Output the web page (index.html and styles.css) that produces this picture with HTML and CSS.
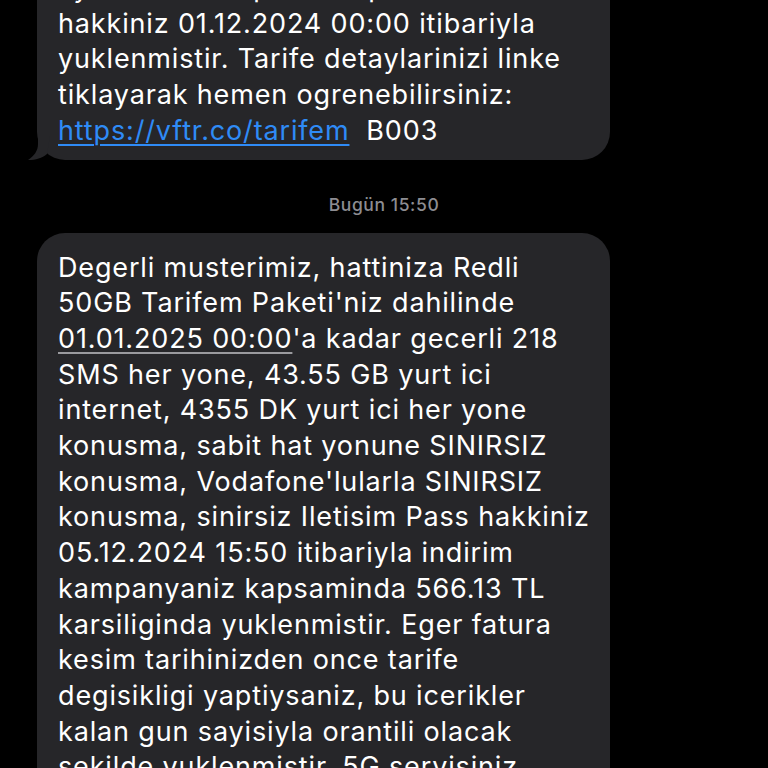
FILE: index.html
```html
<!DOCTYPE html>
<html lang="tr">
<head>
<meta charset="utf-8">
<title>Mesajlar</title>
<link rel="stylesheet" href="styles.css">
</head>
<body>
<div class="thread">
  <div class="bubble bubble-tail">
    <p class="msg">ayni zamanda paket kapsaminda sinirsiz<br>hakkiniz 01.12.2024 00:00 itibariyla<br>yuklenmistir. Tarife detaylarinizi linke<br>tiklayarak hemen ogrenebilirsiniz:<br><a class="link" href="#">https://vftr.co/tarifem</a>&nbsp; B003</p>
    <svg class="tail" width="22" height="24" viewBox="0 0 22 24"><path d="M10 0 L10 8 C10 15 6 20 0 24 C8 24 14 22 19 18 L22 0 Z" fill="#262629"/></svg>
  </div>
  <div class="stamp">Bugün 15:50</div>
  <div class="bubble">
    <p class="msg">Degerli musterimiz, hattiniza Redli<br>50GB Tarifem Paketi'niz dahilinde<br><span class="date">01.01.2025 00:00</span>'a kadar gecerli 218<br>SMS her yone, 43.55 GB yurt ici<br>internet, 4355 DK yurt ici her yone<br>konusma, sabit hat yonune SINIRSIZ<br>konusma, Vodafone'lularla SINIRSIZ<br>konusma, sinirsiz Iletisim Pass hakkiniz<br>05.12.2024 15:50 itibariyla indirim<br>kampanyaniz kapsaminda 566.13 TL<br>karsiliginda yuklenmistir. Eger fatura<br>kesim tarihinizden once tarife<br>degisikligi yaptiysaniz, bu icerikler<br>kalan gun sayisiyla orantili olacak<br>sekilde yuklenmistir. 5G servisiniz<br>aktif edilmistir.</p>
  </div>
</div>
</body>
</html>
```
FILE: styles.css
```css
html, body {
  margin: 0;
  padding: 0;
  background: #000;
  height: 100%;
  overflow: hidden;
}
body {
  font-family: Inter, "Noto Sans", sans-serif;
  color: #fff;
}
.thread {
  display: flex;
  flex-direction: column;
  align-items: flex-start;
  padding-left: 37px;
  margin-top: -47px;
}
.bubble {
  position: relative;
  width: 573px;
  box-sizing: border-box;
  background: #262629;
  border-radius: 28px;
  padding: 17px 20px 11px 21px;
}
.msg {
  margin: 0;
  font-size: 27px;
  line-height: 35.7px;
  letter-spacing: 0.85px;
  white-space: nowrap;
}
.link {
  color: #2f8bf6;
  text-decoration: underline;
  text-underline-offset: 4px;
  text-decoration-thickness: 1.5px;
}
.date {
  text-decoration: underline;
  text-decoration-color: #9a9a9e;
  text-underline-offset: 4px;
  text-decoration-thickness: 1.5px;
}
.tail {
  position: absolute;
  left: -9px;
  bottom: 0;
}
.stamp {
  align-self: stretch;
  margin-left: -37px;
  text-align: center;
  font-size: 17.5px;
  font-weight: 500;
  letter-spacing: 0.6px;
  color: #8d8d92;
  padding: 34px 0 17px;
  line-height: 22px;
}
```
